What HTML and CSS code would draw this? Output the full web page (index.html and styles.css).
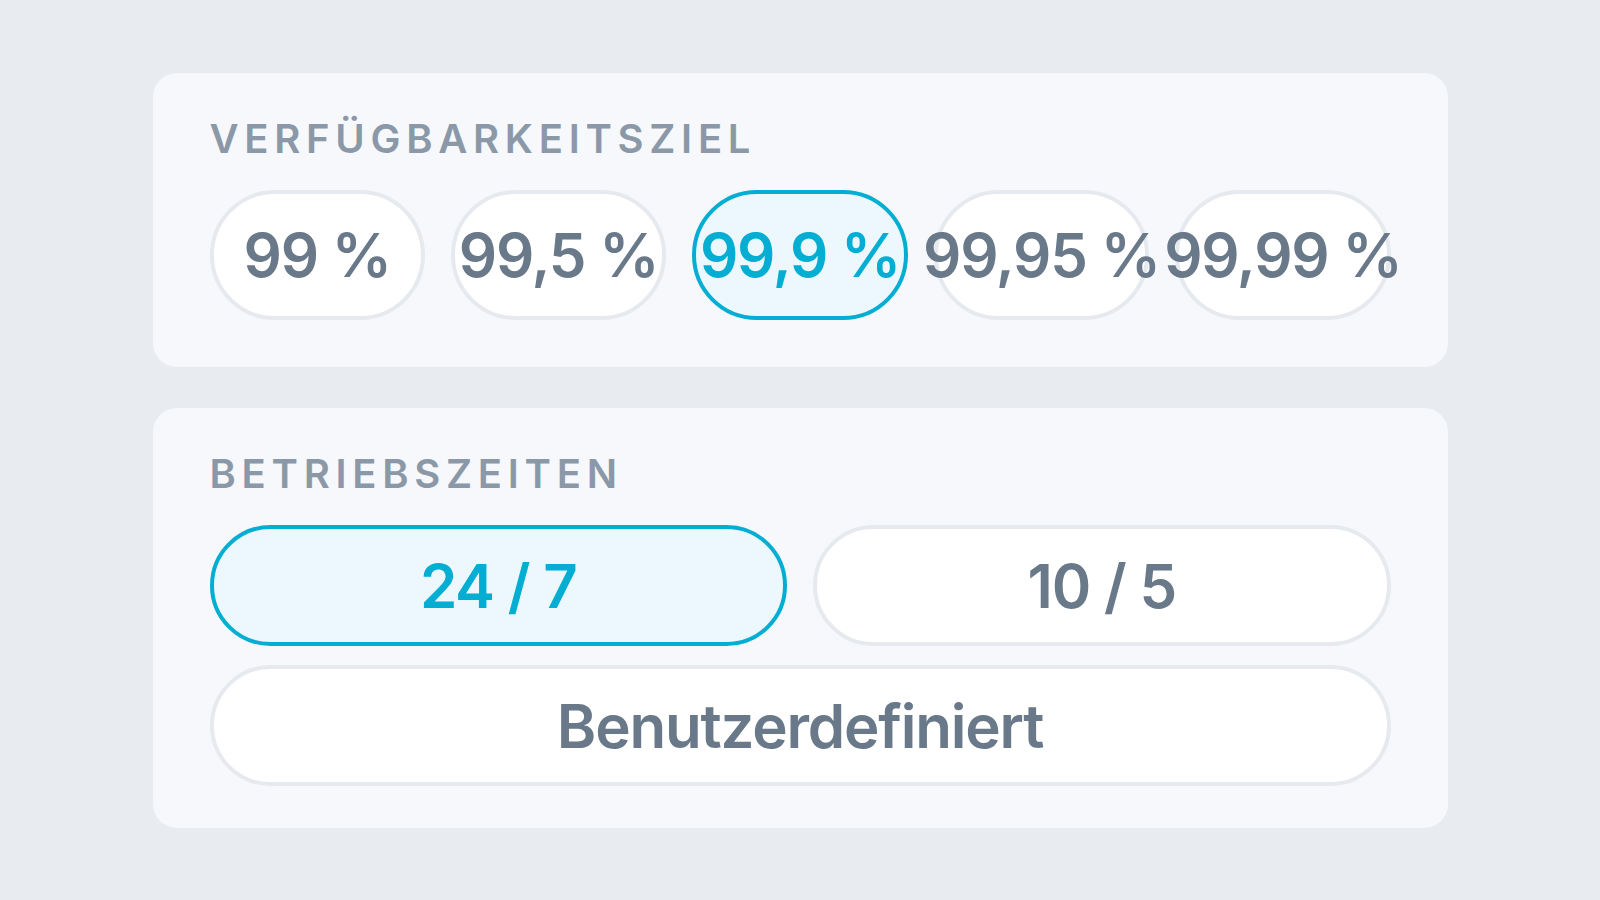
FILE: index.html
```html
<!DOCTYPE html>
<html lang="de">
<head>
    <meta charset="UTF-8">
    <meta name="viewport" content="width=device-width, initial-scale=1.0">
    <title>SLA-Einstellungen</title>
    <link rel="stylesheet" href="styles.css">
</head>
<body>
    <div class="settings">
        <!-- Availability target -->
        <section class="card card-target">
            <h2 class="card-title">Verfügbarkeitsziel</h2>
            <div class="options">
                <button class="option"><span>99 %</span></button>
                <button class="option"><span>99,5 %</span></button>
                <button class="option active"><span>99,9 %</span></button>
                <button class="option"><span>99,95 %</span></button>
                <button class="option"><span>99,99 %</span></button>
            </div>
        </section>

        <!-- Operating hours -->
        <section class="card">
            <h2 class="card-title">Betriebszeiten</h2>
            <div class="hours">
                <button class="option wide active"><span>24 / 7</span></button>
                <button class="option wide"><span>10 / 5</span></button>
                <button class="option wide full"><span>Benutzerdefiniert</span></button>
            </div>
        </section>
    </div>
</body>
</html>
```

FILE: styles.css
```css
body {
    margin: 0;
    padding: 73px 0;
    background-color: #e8ebf0;
    font-family: Inter, "Noto Sans", sans-serif;
}

.settings {
    width: 1295px;
    margin: 0 auto;
    display: flex;
    flex-direction: column;
    gap: 41px;
}

.card {
    background-color: #f6f8fb;
    border-radius: 24px;
    padding: 42px 57px;
}

.card-target {
    padding-bottom: 47px;
}

.card-title {
    margin: 0 0 27px;
    font-size: 40px;
    line-height: 48px;
    font-weight: 600;
    letter-spacing: 0.143em;
    text-transform: uppercase;
    color: #8b98a8;
}

.options {
    display: flex;
    gap: 26px;
}

.hours {
    display: grid;
    grid-template-columns: 1fr 1fr;
    column-gap: 26px;
    row-gap: 19px;
}

.option {
    flex: 1 1 0;
    min-width: 0;
    height: 130px;
    display: flex;
    justify-content: center;
    align-items: center;
    padding: 0;
    background-color: #fff;
    border: 4px solid #e6eaef;
    border-radius: 999px;
    font-family: inherit;
    font-size: 60px;
    font-weight: 600;
    letter-spacing: -0.02em;
    color: #697989;
    white-space: nowrap;
    cursor: pointer;
}

.option.wide {
    height: 121px;
}

.option.full {
    grid-column: 1 / -1;
}

/* selected choice */
.option.active {
    background-color: #edf8fe;
    border-color: #04aed2;
    color: #04aed2;
}
```
